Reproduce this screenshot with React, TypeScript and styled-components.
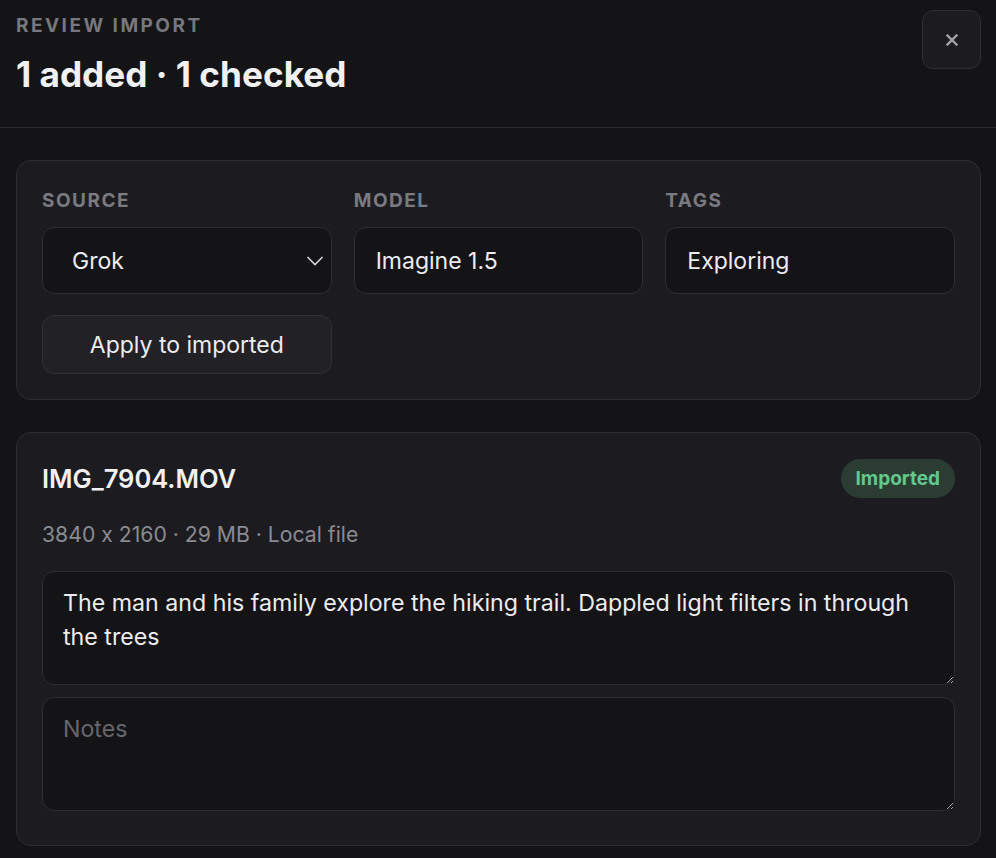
import React from 'react';
import styled, { createGlobalStyle } from 'styled-components';

const GlobalStyle = createGlobalStyle`
  * { box-sizing: border-box; }
  html, body {
    margin: 0;
    padding: 0;
    background: #141416;
  }
  body {
    font-family: Inter, "Noto Sans", "Liberation Sans", sans-serif;
    font-feature-settings: "calt" 0;
    color: #ececef;
    -webkit-font-smoothing: antialiased;
  }
`;

const Page = styled.div`
  width: 996px;
  min-height: 858px;
  background: #141416;
  display: flex;
  flex-direction: column;
`;

const Header = styled.header`
  height: 128px;
  display: flex;
  justify-content: space-between;
  align-items: flex-start;
  padding: 10px 15px 0 16px;
  border-bottom: 1.5px solid #2a2a2e;
`;

const HeadingBlock = styled.div`
  display: flex;
  flex-direction: column;
  gap: 17px;
  padding-top: 5px;
`;

const Eyebrow = styled.div`
  font-size: 19px;
  line-height: 22px;
  font-weight: 700;
  letter-spacing: 0.13em;
  color: #77777f;
  text-transform: uppercase;
`;

const Title = styled.h1`
  margin: 0;
  font-size: 35.2px;
  line-height: 40px;
  font-weight: 700;
  color: #f1f1f3;
`;

const CloseButton = styled.button`
  width: 59px;
  height: 59px;
  border-radius: 11px;
  border: 1.5px solid #2e2e33;
  background: #1c1c20;
  color: #a0a0a6;
  display: flex;
  align-items: center;
  justify-content: center;
  cursor: pointer;
  padding: 0;
`;

const Content = styled.main`
  display: flex;
  flex-direction: column;
  gap: 32px;
  padding: 32px 15px 0 16px;
`;

const Card = styled.section<{ $bottom?: number }>`
  background: #1c1c20;
  border: 1.5px solid #2e2e33;
  border-radius: 15px;
  padding: 26px 25px ${p => p.$bottom ?? 25}px 25px;
`;

const FieldGrid = styled.div`
  display: grid;
  grid-template-columns: repeat(3, 1fr);
  column-gap: 22px;
`;

const Field = styled.label`
  display: flex;
  flex-direction: column;
  gap: 15px;
`;

const FieldLabel = styled.span`
  font-size: 19px;
  line-height: 22px;
  font-weight: 700;
  letter-spacing: 0.08em;
  color: #7a7a82;
  text-transform: uppercase;
  padding-top: 3px;
`;

const inputBase = `
  width: 100%;
  height: 67px;
  border-radius: 12px;
  border: 1.5px solid #2e2e33;
  background: #141417;
  color: #ececef;
  font-family: Inter, "Noto Sans", "Liberation Sans", sans-serif;
  font-feature-settings: "calt" 0;
  font-size: 23px;
  outline: none;
`;

const TextInput = styled.input`
  ${inputBase}
  padding: 0 21px;
`;

const SelectWrap = styled.div`
  position: relative;
`;

const Select = styled.select`
  ${inputBase}
  appearance: none;
  -webkit-appearance: none;
  padding: 0 40px 0 29px;
`;

const Chevron = styled.svg`
  position: absolute;
  right: 8px;
  top: 50%;
  transform: translateY(-50%);
  pointer-events: none;
`;

const ApplyButton = styled.button`
  margin-top: 21px;
  width: calc((100% - 44px) / 3);
  height: 59px;
  border-radius: 12px;
  border: 1.5px solid #303035;
  background: #222226;
  color: #ececef;
  font-family: Inter, "Noto Sans", "Liberation Sans", sans-serif;
  font-size: 23px;
  cursor: pointer;
`;

const ItemHeader = styled.div`
  display: flex;
  justify-content: space-between;
  align-items: center;
  height: 39px;
`;

const FileName = styled.h2`
  margin: 0;
  font-size: 25.5px;
  font-weight: 600;
  color: #f1f1f3;
`;

const Badge = styled.span`
  height: 39px;
  padding: 0 15px;
  border-radius: 999px;
  background: #2b3d33;
  color: #62c98c;
  font-size: 19px;
  font-weight: 700;
  display: inline-flex;
  align-items: center;
`;

const Meta = styled.div`
  margin-top: 20px;
  font-size: 21.2px;
  line-height: 32px;
  color: #8a8a91;
`;

const TextArea = styled.textarea`
  display: block;
  width: 100%;
  height: 114px;
  margin-top: 12px;
  padding: 14px 20px;
  border-radius: 12px;
  border: 1.5px solid #2e2e33;
  background: #141417;
  color: #ececef;
  color-scheme: dark;
  font-family: Inter, "Noto Sans", "Liberation Sans", sans-serif;
  font-feature-settings: "calt" 0;
  font-size: 23.2px;
  line-height: 34px;
  resize: vertical;
  outline: none;

  &::placeholder {
    color: #66666d;
  }

  &:first-of-type {
    margin-top: 21px;
  }
`;

const App: React.FC = () => {
  return (
    <Page>
      <GlobalStyle />
      <Header>
        <HeadingBlock>
          <Eyebrow>Review import</Eyebrow>
          <Title>1 added · 1 checked</Title>
        </HeadingBlock>
        <CloseButton aria-label="Close">
          <svg width="12" height="12" viewBox="0 0 12 12">
            <path d="M1.5 1.5l9 9M10.5 1.5l-9 9" stroke="currentColor" strokeWidth="2.4" strokeLinecap="square" />
          </svg>
        </CloseButton>
      </Header>

      <Content>
        <Card>
          <FieldGrid>
            <Field>
              <FieldLabel>Source</FieldLabel>
              <SelectWrap>
                <Select defaultValue="Grok">
                  <option>Grok</option>
                  <option>Sora</option>
                  <option>Veo</option>
                </Select>
                <Chevron width="18" height="11" viewBox="0 0 18 11">
                  <path d="M1.5 1.5L9 9l7.5-7.5" fill="none" stroke="#d4d4d8" strokeWidth="1.6" />
                </Chevron>
              </SelectWrap>
            </Field>
            <Field>
              <FieldLabel>Model</FieldLabel>
              <TextInput defaultValue="Imagine 1.5" />
            </Field>
            <Field>
              <FieldLabel>Tags</FieldLabel>
              <TextInput defaultValue="Exploring" />
            </Field>
          </FieldGrid>
          <ApplyButton>Apply to imported</ApplyButton>
        </Card>

        <Card $bottom={34}>
          <ItemHeader>
            <FileName>IMG_7904.MOV</FileName>
            <Badge>Imported</Badge>
          </ItemHeader>
          <Meta>3840 x 2160 · 29 MB · Local file</Meta>
          <TextArea defaultValue="The man and his family explore the hiking trail. Dappled light filters in through the trees" />
          <TextArea placeholder="Notes" />
        </Card>
      </Content>
    </Page>
  );
};

export default App;
